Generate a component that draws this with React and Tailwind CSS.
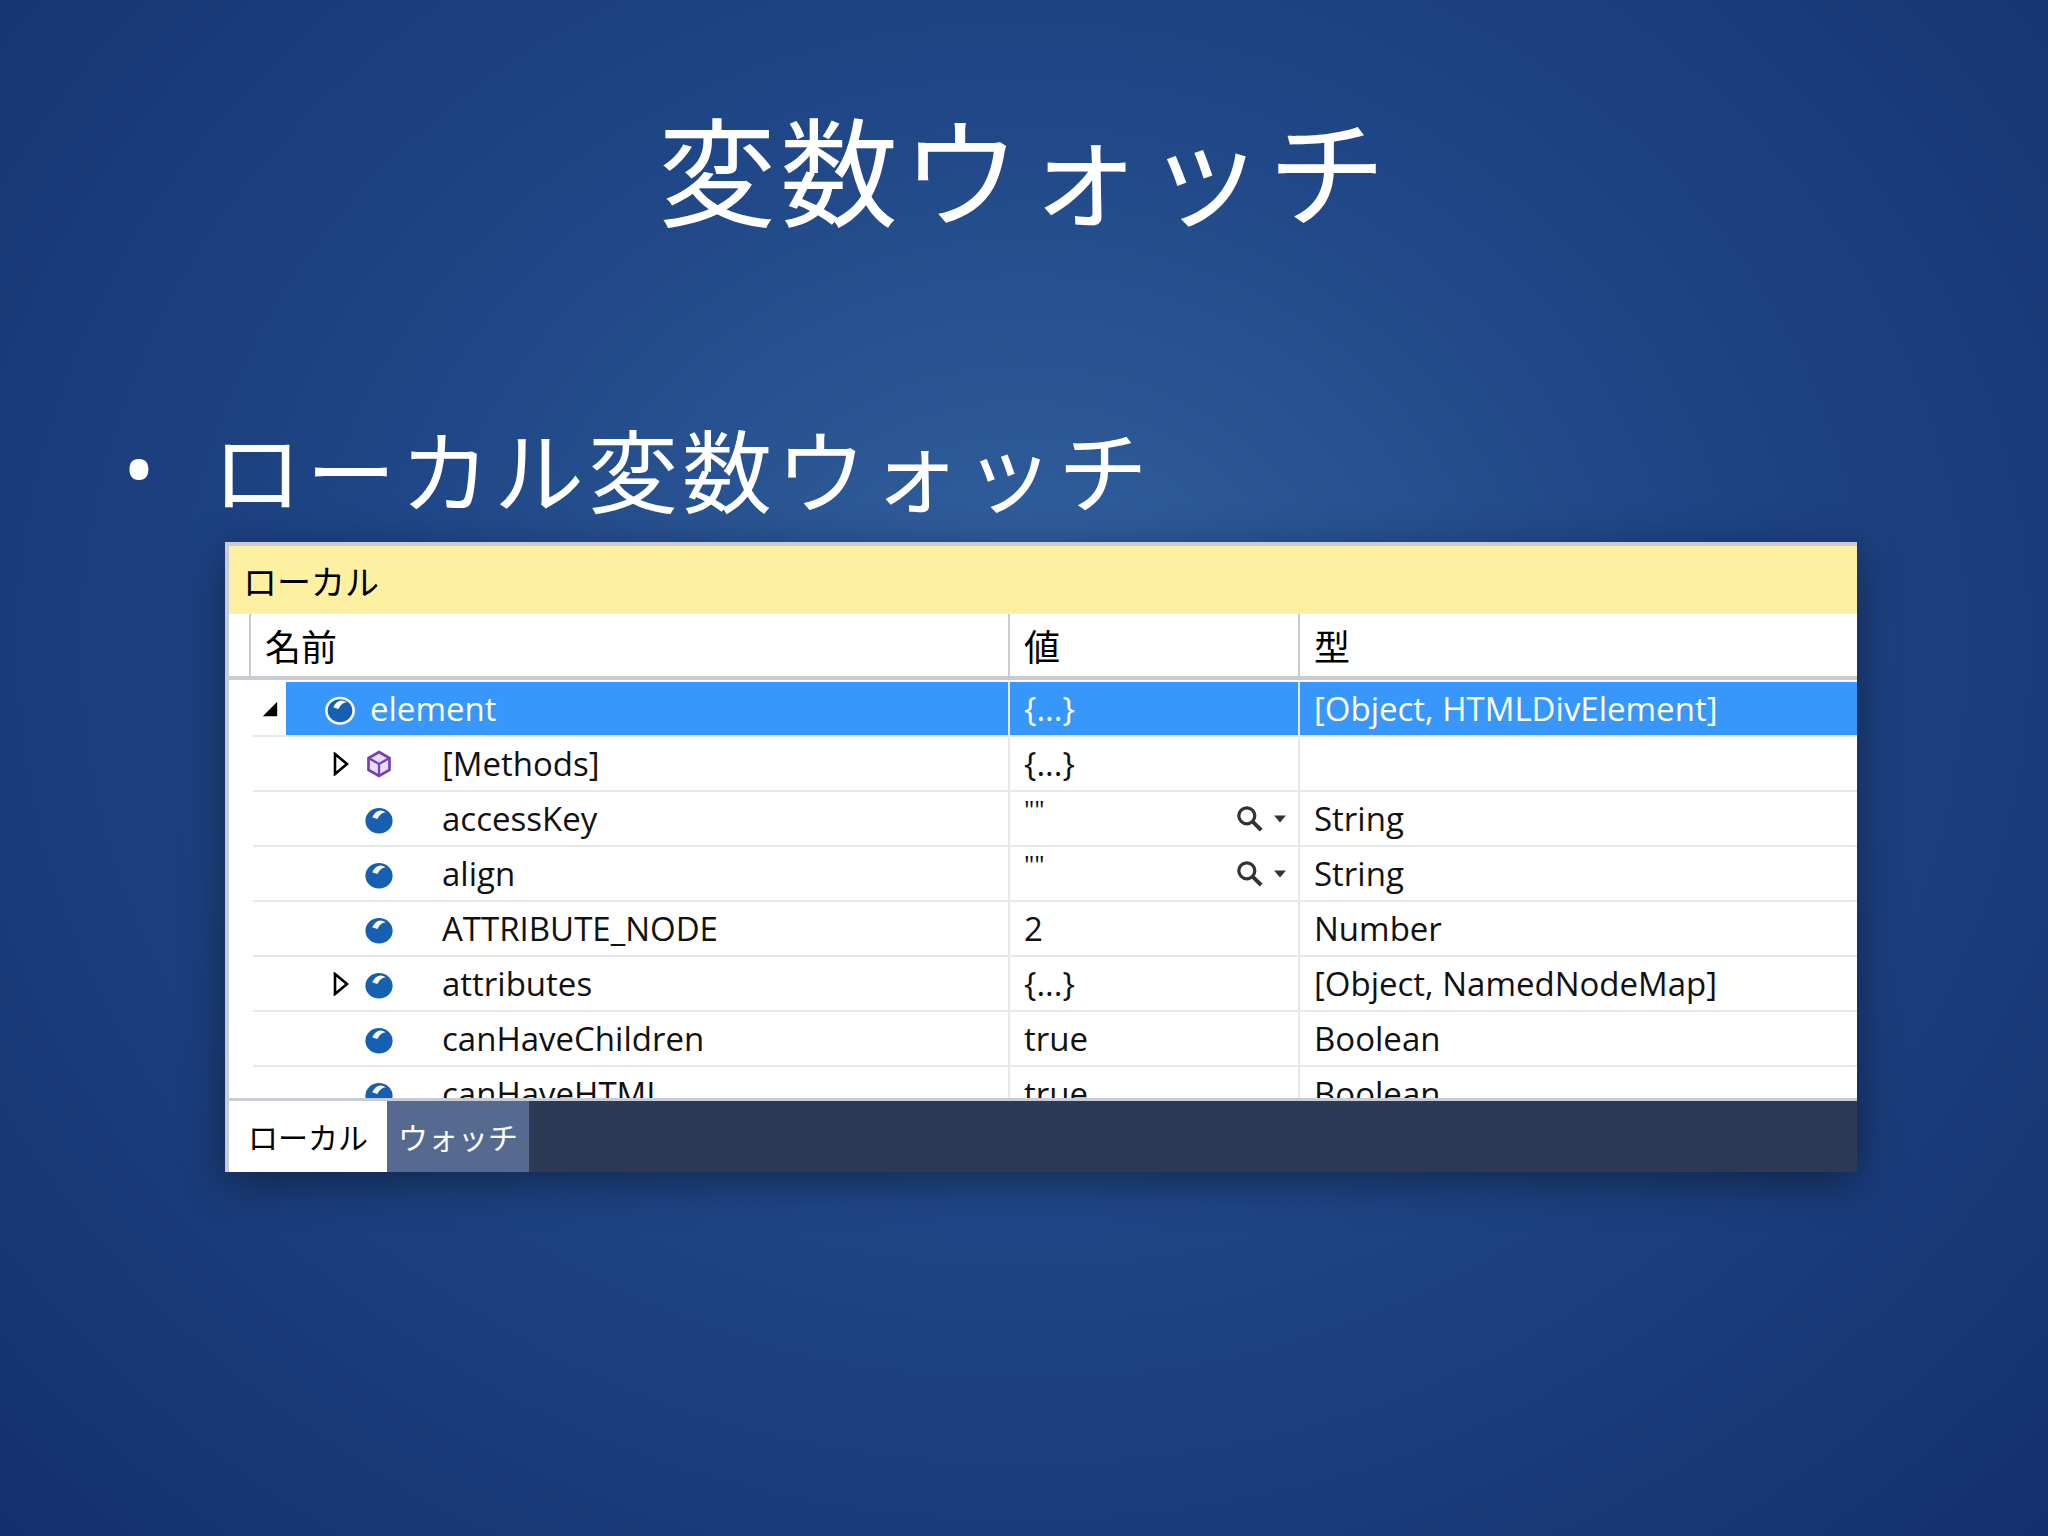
const F = { fontFamily: '"Open Sans","Noto Sans CJK JP",sans-serif' };
const J = { fontFamily: '"Noto Sans CJK JP",sans-serif' };

function Obj({ sel }) {
  return (
    <svg width="34" height="34" viewBox="0 0 20 20">
      <ellipse cx="10" cy="11" rx="8" ry="7.5" fill="#1560b0" stroke={sel ? "#fff" : "none"} strokeWidth="1.5" />
      <path d="M6 9 Q9 3 14 6 Q11 6 9 10 Z" fill="#fff" />
    </svg>
  );
}
function Meth() {
  return (
    <svg width="30" height="32" viewBox="0 0 20 20">
      <path d="M10 2 L17 6 L17 14 L10 18 L3 14 L3 6 Z" fill="#e9dcf5" stroke="#7a3fb0" strokeWidth="1.8" />
      <path d="M3 6 L10 10 L17 6 M10 10 L10 18" fill="none" stroke="#7a3fb0" strokeWidth="1.5" />
    </svg>
  );
}
function Tri({ open }) {
  return open ? (
    <svg width="18" height="18" viewBox="0 0 10 10"><path d="M9 1 L9 9 L1 9 Z" fill="#000" /></svg>
  ) : (
    <svg width="16" height="24" viewBox="0 0 8 12"><path d="M1 1 L7 6 L1 11 Z" fill="#fff" stroke="#000" strokeWidth="1.3" /></svg>
  );
}
function Mag() {
  return (
    <span className="flex items-center gap-2">
      <svg width="32" height="32" viewBox="0 0 20 20"><circle cx="8" cy="8" r="5" fill="none" stroke="#333" strokeWidth="2" /><path d="M11.5 11.5 L17 17" stroke="#333" strokeWidth="2.5" /></svg>
      <svg width="12" height="8" viewBox="0 0 10 6"><path d="M0 0 L10 0 L5 6 Z" fill="#333" /></svg>
    </span>
  );
}

const rows = [
  { n: "[Methods]", v: "{...}", t: "", tri: "c", icon: "m" },
  { n: "accessKey", v: '""', t: "String", mag: true },
  { n: "align", v: '""', t: "String", mag: true },
  { n: "ATTRIBUTE_NODE", v: "2", t: "Number" },
  { n: "attributes", v: "{...}", t: "[Object, NamedNodeMap]", tri: "c" },
  { n: "canHaveChildren", v: "true", t: "Boolean" },
  { n: "canHaveHTML", v: "true", t: "Boolean" },
];

export default function App() {
  return (
    <div className="w-[2048px] h-[1536px] overflow-hidden bg-[radial-gradient(ellipse_at_50%_42%,#33629f_0%,#1f4686_45%,#14306c_100%)] flex flex-col">
      <h1 className="text-white text-[118px] leading-none text-center mt-[108px] tracking-[4px]" style={J}>変数ウォッチ</h1>
      <div className="flex items-center mt-[196px] ml-[122px] text-white">
        <span className="text-[90px] leading-none w-[90px]" style={F}>•</span>
        <span className="text-[90px] leading-none tracking-[4px]" style={J}>ローカル変数ウォッチ</span>
      </div>
      <div className="ml-[225px] mt-[30px] w-[1632px] h-[630px] flex flex-col bg-[#2d3a56] shadow-[0_10px_40px_rgba(0,0,0,0.4)] border-t-[4px] border-l-[4px] border-[#c9ccd6]">
        <div className="h-[68px] bg-[#fdf0a0] flex items-center pl-[14px] text-[34px] text-black" style={J}>ローカル</div>
        <div className="flex-1 bg-white overflow-hidden flex flex-col">
          <div className="flex h-[66px] shrink-0 border-b-[4px] border-[#c8ccd2] text-[36px]" style={J}>
            <div className="w-[22px] border-r-2 border-[#c8ccd2]" />
            <div className="w-[759px] border-r-2 border-[#c8ccd2] pl-[14px] flex items-center">名前</div>
            <div className="w-[290px] border-r-2 border-[#c8ccd2] pl-[14px] flex items-center">値</div>
            <div className="flex-1 pl-[14px] flex items-center">型</div>
          </div>
          <div className="flex h-[55px] shrink-0 text-[33px] pt-[2px]" style={F}>
            <div className="w-[24px]" />
            <div className="w-[33px] flex items-center justify-center"><Tri open /></div>
            <div className="w-[724px] bg-[#3797fa] text-white flex items-center pl-[37px] gap-[13px] border-r-2 border-[#e3e6ea]"><Obj sel />element</div>
            <div className="w-[290px] bg-[#3797fa] text-white flex items-center pl-[14px] border-r-2 border-[#e3e6ea]">{"{...}"}</div>
            <div className="flex-1 bg-[#3797fa] text-white flex items-center pl-[14px]">[Object, HTMLDivElement]</div>
          </div>
          {rows.map((r, i) => (
            <div key={i} className="flex h-[55px] shrink-0 text-[33px] text-[#111]" style={F}>
              <div className="w-[24px]" />
              <div className="w-[757px] flex items-center border-t-2 border-r-2 border-[#e6e8ec]">
                <div className="w-[104px] flex justify-end pr-[8px]">{r.tri && <Tri />}</div>
                <div className="w-[44px] flex justify-center">{r.icon === "m" ? <Meth /> : <Obj />}</div>
                <span className="ml-[41px]">{r.n}</span>
              </div>
              <div className="w-[290px] flex items-center justify-between pl-[14px] pr-[12px] border-t-2 border-r-2 border-[#e6e8ec]">
                <span className={r.v === '""' ? "self-start text-[26px] -mt-[2px]" : ""}>{r.v}</span>
                {r.mag && <Mag />}
              </div>
              <div className="flex-1 flex items-center pl-[14px] border-t-2 border-[#e6e8ec]">{r.t}</div>
            </div>
          ))}
        </div>
        <div className="h-[74px] shrink-0 flex border-t-[3px] border-[#c9ccd6] text-[30px] whitespace-nowrap" style={J}>
          <div className="w-[158px] bg-white text-black flex items-center justify-center">ローカル</div>
          <div className="w-[142px] bg-[#56698f] text-white flex items-center justify-center">ウォッチ</div>
        </div>
      </div>
    </div>
  );
}
